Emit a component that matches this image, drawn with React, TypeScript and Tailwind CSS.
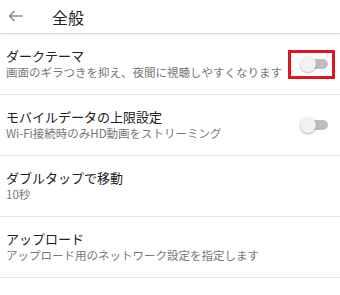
import React from "react";

type Setting = {
  title: string;
  sub: string;
  toggle?: boolean;
  highlight?: boolean;
};

const settings: Setting[] = [
  {
    title: "ダークテーマ",
    sub: "画面のギラつきを抑え、夜間に視聴しやすくなります",
    toggle: true,
    highlight: true,
  },
  {
    title: "モバイルデータの上限設定",
    sub: "Wi-Fi接続時のみHD動画をストリーミング",
    toggle: true,
  },
  { title: "ダブルタップで移動", sub: "10秒" },
  { title: "アップロード", sub: "アップロード用のネットワーク設定を指定します" },
];

const Toggle: React.FC = () => (
  <div className="relative w-[28px] h-[16px] flex items-center">
    <div className="w-full h-[10px] rounded-full bg-[#bdbdbd]" />
    <div className="absolute left-0 top-0 w-[16px] h-[16px] rounded-full bg-[#f1f1f1] shadow-[0_1px_2px_rgba(0,0,0,0.3)]" />
  </div>
);

export default function App() {
  return (
    <div
      className="w-[340px] h-[295px] bg-white overflow-hidden"
      style={{ fontFamily: '"Noto Sans CJK JP", "Noto Sans", sans-serif' }}
    >
      <div className="h-[34px] flex items-center border-b border-[#dcdcdc] shadow-[0_1px_2px_rgba(0,0,0,0.08)]">
        <svg
          className="ml-[8px] mt-[-1px]"
          width="15"
          height="12"
          viewBox="0 0 15 12"
          fill="none"
          stroke="#8a8a8a"
          strokeWidth="1.4"
        >
          <path d="M14.5 6H1.5M6.5 1L1.5 6l5 5" />
        </svg>
        <span className="ml-[29px] text-[16px] leading-[20px] text-[#202020]">
          全般
        </span>
      </div>
      {settings.map((s) => (
        <div
          key={s.title}
          className="h-[61px] flex items-center border-b border-[#e6e6e6] pl-[6px] pr-[12px]"
        >
          <div className="flex-1 flex flex-col">
            <span className="text-[13px] leading-[16px] text-[#202020]">
              {s.title}
            </span>
            <span className="text-[11.5px] leading-[16px] text-[#777777]">
              {s.sub}
            </span>
          </div>
          {s.toggle &&
            (s.highlight ? (
              <div className="border-[3px] border-[#e3131f] w-[47px] h-[29px] flex items-center pl-[9px] -mr-[7px]">
                <Toggle />
              </div>
            ) : (
              <div className="w-[47px] flex items-center pl-[12px] -mr-[7px]">
                <Toggle />
              </div>
            ))}
        </div>
      ))}
    </div>
  );
}
